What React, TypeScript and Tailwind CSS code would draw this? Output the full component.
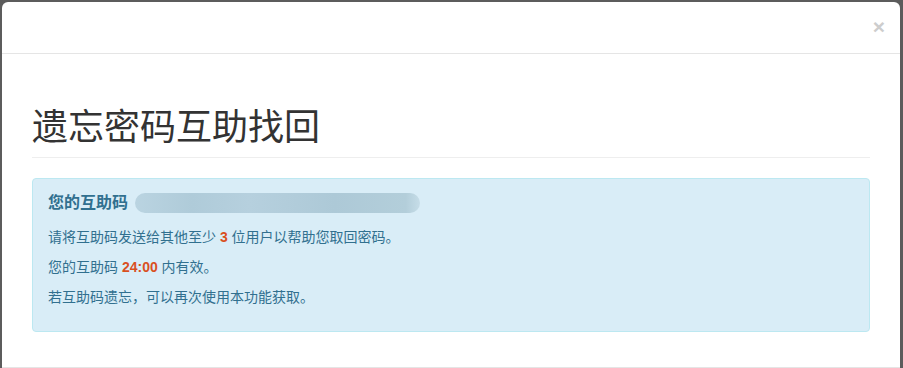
export default function App() {
  return (
    <div
      className="h-[368px] w-[903px] overflow-hidden bg-[#5c5c5c] pl-[2px] pr-[3px] pt-[2px]"
      style={{ fontFamily: '"Liberation Sans", "Noto Sans CJK SC", sans-serif' }}
    >
      <div className="h-[380px] rounded-[6px] bg-white">
        {/* header */}
        <div className="relative h-[52px] border-b border-[#e5e5e5]">
          <button className="absolute right-[15px] top-[14px] text-[21px] font-bold leading-none text-[#cdcdcd]">
            ×
          </button>
        </div>

        {/* body */}
        <div className="px-[30px] pb-[15px] pt-[15px]">
          <h1 className="mt-[39px] border-b border-[#eeeeee] pb-[9px] text-[36px] font-normal leading-[1.1] text-[#333]">
            遗忘密码互助找回
          </h1>

          <div className="mb-[20px] mt-[20px] h-[154px] rounded-[4px] border border-[#bce8f1] bg-[#d9edf7] px-[15px] pt-[14px] text-[14px] text-[#31708f]">
            <div className="mb-[14px] flex h-[20px] items-center text-[16px] font-bold leading-[20px]">
              您的互助码
              <span className="ml-[7px] h-[20px] w-[285px] rounded-full bg-[linear-gradient(90deg,#bad4e1,#afcbd9_20%,#b6d0de_40%,#adc9d7_70%,#b3ceda_95%,#c6dde8)]" />
            </div>
            <p className="mb-[10px] leading-[20px]">
              请将互助码发送给其他至少 <b className="text-[#d9501f]">3</b> 位用户以帮助您取回密码。
            </p>
            <p className="mb-[10px] leading-[20px]">
              您的互助码 <b className="text-[#d9501f]">24:00</b> 内有效。
            </p>
            <p className="leading-[20px]">若互助码遗忘，可以再次使用本功能获取。</p>
          </div>
        </div>

        {/* footer */}
        <div className="border-t border-[#e5e5e5]" />
      </div>
    </div>
  );
}
